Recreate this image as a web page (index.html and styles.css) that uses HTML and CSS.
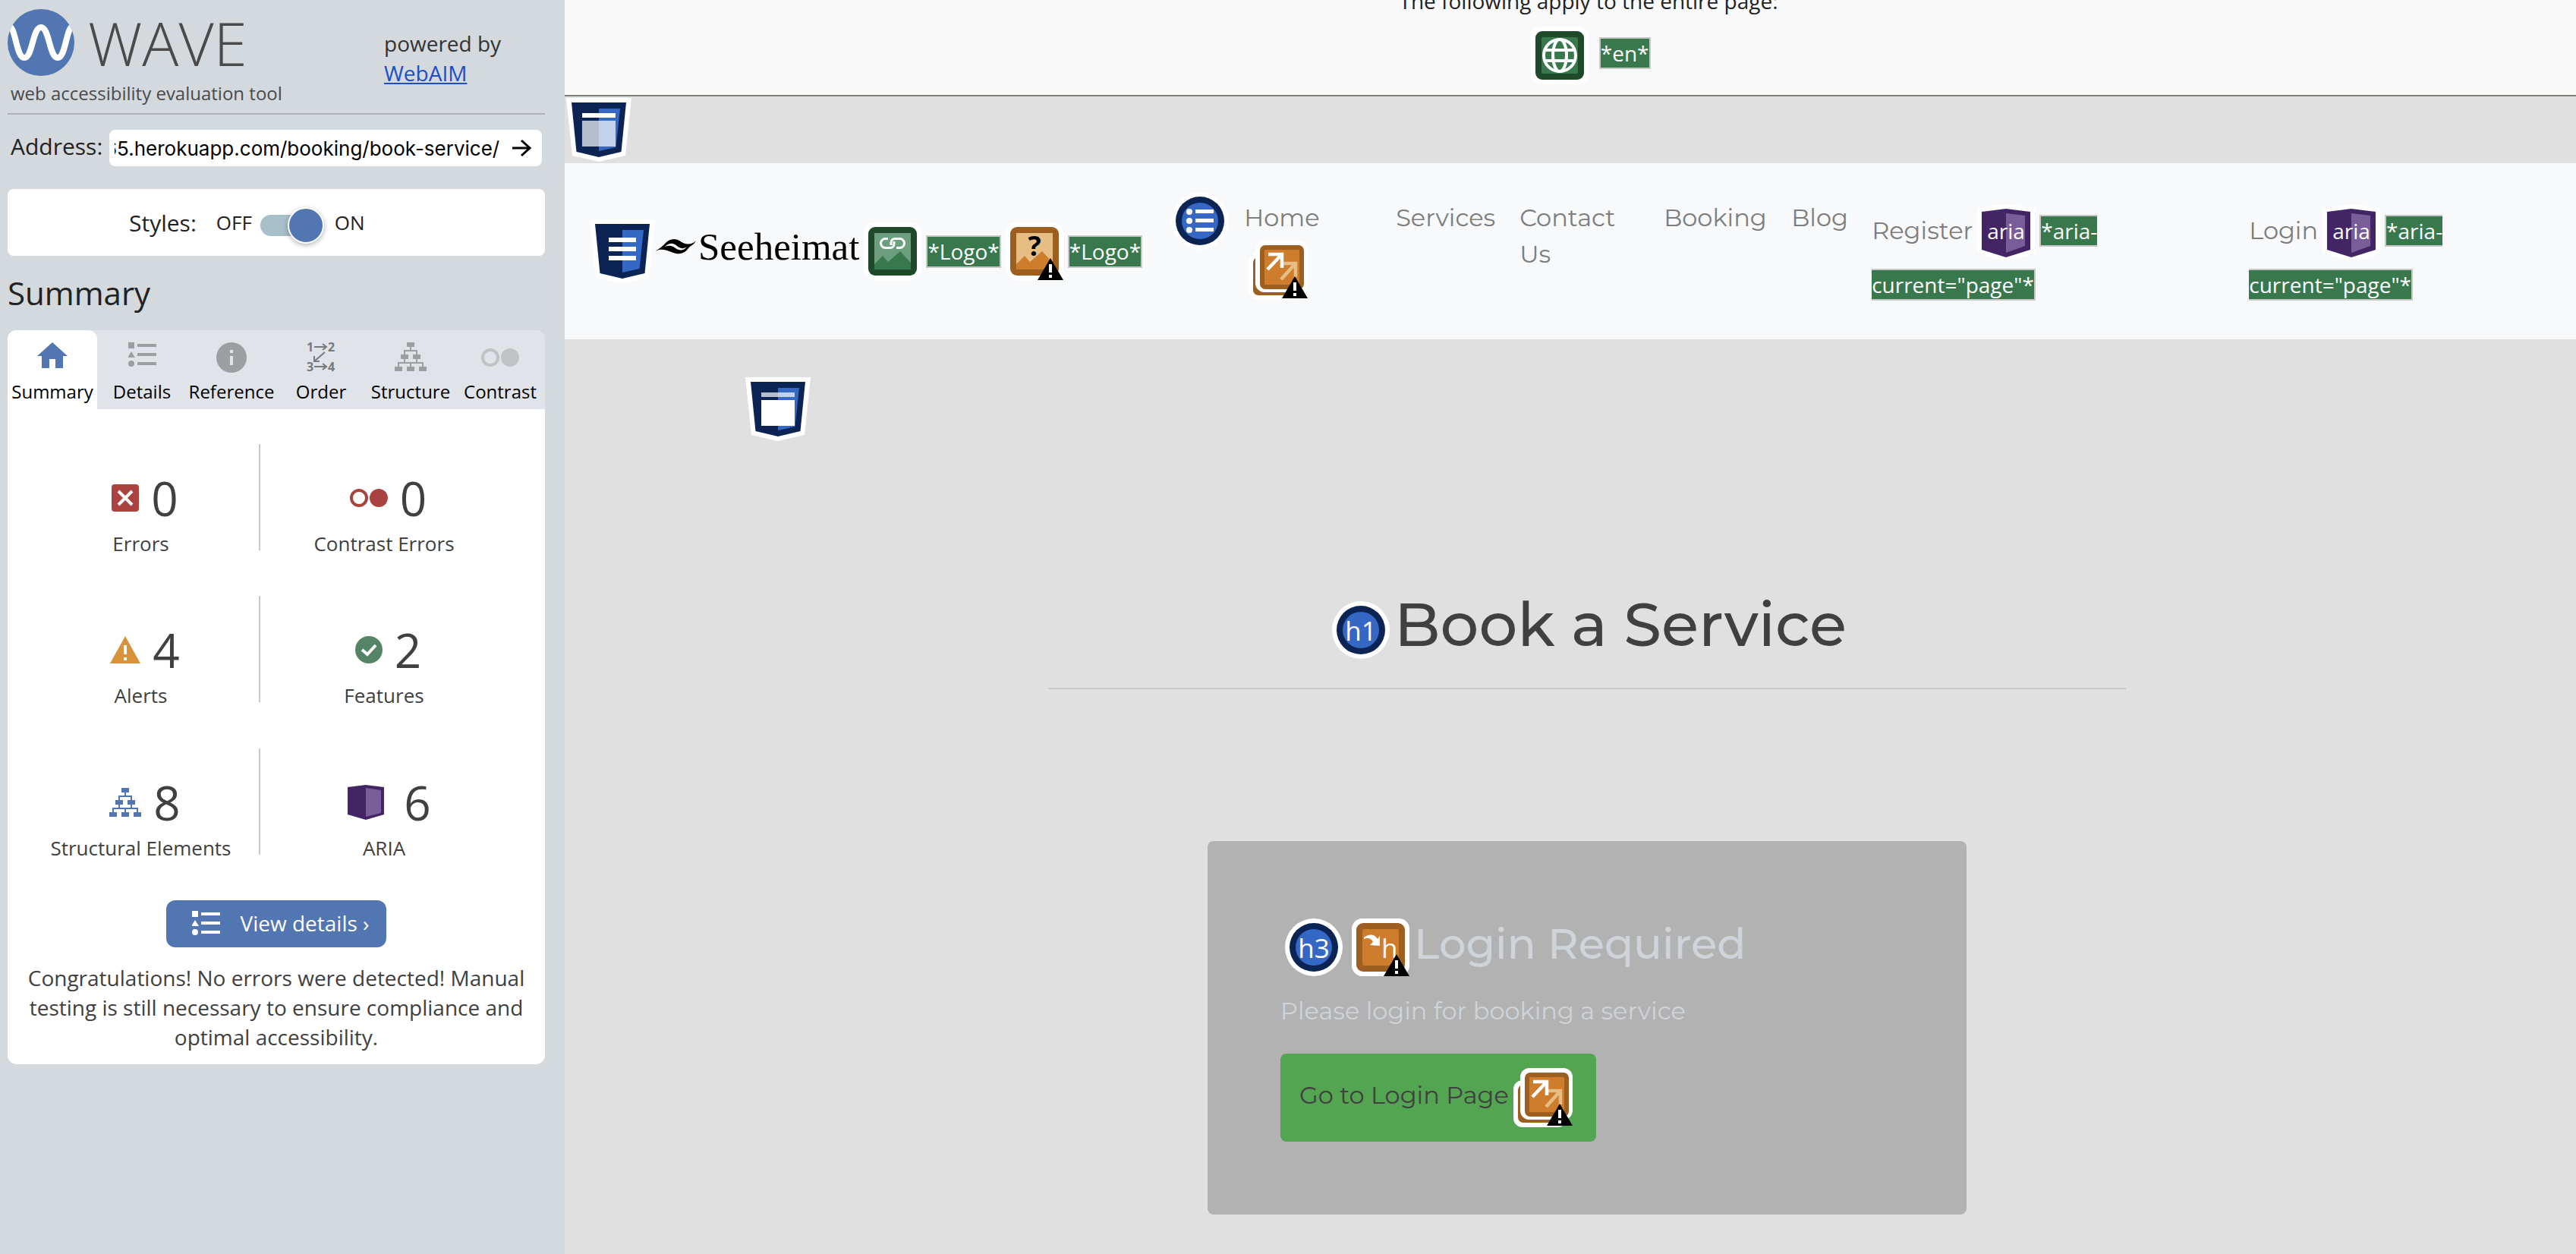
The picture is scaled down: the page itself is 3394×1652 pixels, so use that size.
FILE: index.html
```html
<!DOCTYPE html>
<html lang="en">
<head>
<meta charset="utf-8">
<title>WAVE Report</title>
<link rel="stylesheet" href="styles.css">
</head>
<body>
<svg class="sprite" aria-hidden="true">
  <symbol id="shield" viewBox="0 0 86 84">
    <path fill="#fff" d="M0 0H86L78 76 43 84 8 76Z"/>
    <path fill="#0b2454" d="M7 6H79L72.500 71 43 78 13.500 71Z"/>
    <path fill="#3568c4" d="M43 14H71L65.500 65 43 70Z"/>
  </symbol>
  <symbol id="warn" viewBox="0 0 34 29">
    <path d="M17 0 34 29H0Z"/>
    <path fill="#fff" d="M15 8H19V19H15ZM15 22H19V26H15Z"/>
  </symbol>
  <symbol id="tile-orange" viewBox="0 0 76 76">
    <rect width="76" height="76" rx="14" fill="#fff"/>
    <rect x="6" y="6" width="64" height="64" rx="9" fill="#9c5f20"/>
    <rect x="14" y="14" width="48" height="48" rx="2" fill="#cd7d2c"/>
  </symbol>
  <symbol id="tile-green" viewBox="0 0 76 76">
    <rect width="76" height="76" rx="14" fill="#fff"/>
    <rect x="6" y="6" width="64" height="64" rx="9" fill="#1f4a29"/>
    <rect x="14" y="14" width="48" height="48" rx="2" fill="#38784c"/>
  </symbol>
  <symbol id="disc" viewBox="0 0 76 76">
    <circle cx="38" cy="38" r="38" fill="#fff"/>
    <circle cx="38" cy="38" r="32" fill="#0b2454"/>
    <circle cx="38" cy="38" r="24" fill="#3568c4"/>
  </symbol>
  <symbol id="redundant" viewBox="0 0 78 78">
    <rect y="16" width="70" height="62" rx="12" fill="#fff"/>
    <rect x="6" y="22" width="58" height="50" rx="7" fill="#9c5f20"/>
    <rect x="9" y="0" width="69" height="68" rx="12" fill="#fff"/>
    <rect x="15" y="6" width="58" height="58" rx="7" fill="#9c5f20"/>
    <rect x="21" y="12" width="46" height="46" rx="1" fill="#cd7d2c"/>
    <path d="M44 30H62V48M62 30 43 51" fill="none" stroke="#e6bd85" stroke-width="4.500"/>
    <path d="M26 18H44V36M44 18 25 38" fill="none" stroke="#fff" stroke-width="4.500"/>
    <use href="#warn" x="44" y="47" width="34" height="29"/>
  </symbol>
  <symbol id="aria" viewBox="0 0 76 76">
    <path fill="#fff" d="M38 0 76 5V64L38 76 0 64V5Z"/>
    <path fill="#432566" d="M38 6 70 10V60L38 70 6 60V10Z"/>
    <path fill="#795d99" d="M38 12 63 15V55L38 64Z"/>
  </symbol>
  <symbol id="list" viewBox="0 0 37 32">
    <path d="M0 0H8V8H0ZM4 12 9 20H-1ZM12 2H37V6H12ZM12 14H37V18H12ZM12 26H37V30H12Z"/>
    <circle cx="4" cy="28" r="4"/>
  </symbol>
  <symbol id="tree" viewBox="0 0 42 38">
    <path d="M16 0H26V6H16ZM8 16H18V22H8ZM24 16H34V22H24ZM0 32H10V38H0ZM16 32H26V38H16ZM32 32H42V38H32Z"/>
    <path d="M21 6V11M13 16V11H29V16M13 22V27M29 22V27M5 32V27H37V32M21 27V32" fill="none" stroke="currentColor" stroke-width="2"/>
  </symbol>
  <symbol id="contrast" viewBox="0 0 50 24">
    <circle cx="12" cy="12" r="10" fill="none" stroke="currentColor" stroke-width="4"/>
    <circle cx="38" cy="12" r="12"/>
  </symbol>
</svg>

<aside class="sidebar">
  <header class="masthead">
    <div>
      <div class="brand">
        <svg width="88" height="88" viewBox="0 0 88 88" aria-hidden="true">
          <clipPath id="round"><circle cx="44" cy="44" r="44"/></clipPath>
          <circle cx="44" cy="44" r="44" fill="#5276b1"/>
          <path clip-path="url(#round)" d="M1 22C11 22 11 64 22 64S33 24 44 24 55 64 66 64 77 22 87 22" fill="none" stroke="#fff" stroke-width="8"/>
        </svg>
        <h1 class="wordmark">WAVE</h1>
      </div>
      <p class="tagline">web accessibility evaluation tool</p>
    </div>
    <p class="powered">powered by<br><a href="#webaim">WebAIM</a></p>
  </header>

  <form class="address">
    <label for="url">Address:</label>
    <div class="address-box">
      <input id="url" type="text" value="65.herokuapp.com/booking/book-service/">
      <button class="go" type="button" aria-label="Analyze">
        <svg width="26" height="24" viewBox="0 0 26 24" aria-hidden="true"><path d="M1 12H24M13 2 24 12 13 22" fill="none" stroke="#000" stroke-width="3"/></svg>
      </button>
    </div>
  </form>

  <div class="styles-card">
    <label class="styles-label" for="styles">Styles:</label>
    <span>OFF</span>
    <input id="styles" class="switch" type="checkbox" checked>
    <span>ON</span>
  </div>

  <h2 class="section-title">Summary</h2>

  <section class="report">
    <div class="tabs" role="tablist">
      <button class="tab active" role="tab" aria-selected="true">
        <svg width="40" height="40" viewBox="0 0 40 40"><path d="M20 0 40 18H34V34H24V22H16V34H6V18H0Z"/></svg>
        Summary</button>
      <button class="tab" role="tab">
        <svg width="40" height="40"><use href="#list" x="2" y="0" width="37" height="32"/></svg>
        Details</button>
      <button class="tab" role="tab">
        <svg width="40" height="40"><circle cx="20" cy="20" r="20"/><path fill="#e0e4e9" d="M18 10H22V14H18ZM18 18H22V30H18Z"/></svg>
        Reference</button>
      <button class="tab order" role="tab">
        <svg width="40" height="40" font-size="16" font-weight="700"><text x="1" y="12">1</text><text x="29" y="12">2</text><text x="1" y="38">3</text><text x="29" y="38">4</text>
          <path d="M11 6H27M22 2 27 6 22 10M11 32H27M22 28 27 32 22 36M25 13 11 25M11 18V25H18" fill="none" stroke="#77797c" stroke-width="2"/></svg>
        Order</button>
      <button class="tab" role="tab">
        <svg width="42" height="40"><use href="#tree" width="42" height="38"/></svg>
        Structure</button>
      <button class="tab dim" role="tab">
        <svg width="50" height="40"><use href="#contrast" y="8" width="50" height="24"/></svg>
        Contrast</button>
    </div>

    <div class="panel" role="tabpanel">
      <div class="counts">
        <div class="count">
          <p class="figure"><svg width="36" height="36" viewBox="0 0 36 36"><rect width="36" height="36" rx="4" fill="#aa4340"/><path d="M9 9 27 27M27 9 9 27" stroke="#fff" stroke-width="4"/></svg>0</p>
          <p class="caption">Errors</p>
        </div>
        <div class="divider"></div>
        <div class="count">
          <p class="figure red"><svg width="50" height="24"><use href="#contrast" width="50" height="24"/></svg>0</p>
          <p class="caption">Contrast Errors</p>
        </div>
        <div class="count">
          <p class="figure"><svg width="40" height="36" viewBox="0 0 40 36"><path d="M20 0 40 36H0Z" fill="#d8923b"/><path d="M18 12H22V24H18ZM18 28H22V32H18Z" fill="#fff"/></svg>4</p>
          <p class="caption">Alerts</p>
        </div>
        <div class="divider"></div>
        <div class="count">
          <p class="figure"><svg width="36" height="36" viewBox="0 0 36 36"><circle cx="18" cy="18" r="18" fill="#558466"/><path d="M9 18 16 24 27 12" fill="none" stroke="#fff" stroke-width="4"/></svg>2</p>
          <p class="caption">Features</p>
        </div>
        <div class="count">
          <p class="figure blue"><svg width="42" height="38"><use href="#tree" width="42" height="38"/></svg>8</p>
          <p class="caption">Structural Elements</p>
        </div>
        <div class="divider"></div>
        <div class="count">
          <p class="figure wide"><svg width="48" height="46" viewBox="0 0 48 46"><path fill="#432566" d="M24 0 48 3V39L24 46 0 39V3Z"/><path fill="#795d99" d="M24 4 44 7V37L24 42Z"/></svg>6</p>
          <p class="caption">ARIA</p>
        </div>
      </div>
      <button class="details"><svg width="37" height="32" aria-hidden="true"><use href="#list" width="37" height="32"/></svg>View details ›</button>
      <p class="note">Congratulations! No errors were detected! Manual testing is still necessary to ensure compliance and optimal accessibility.</p>
    </div>
  </section>
</aside>

<main class="page">
  <section class="page-wide">
    <p class="page-wide-text">The following apply to the entire page:</p>
    <p class="page-wide-icons"><svg class="icon" width="76" height="76" role="img" aria-label="Language"><use href="#tile-green"/><g fill="none" stroke="#fff" stroke-width="4"><circle cx="38" cy="38" r="21"/><ellipse cx="38" cy="38" rx="9" ry="21"/><path d="M20 31H56M20 45H56"/></g></svg> <span class="code">*en*</span></p>
  </section>

  <div class="landmark"><svg width="86" height="84" role="img" aria-label="Header"><use href="#shield"/><path fill="#fff" d="M21 20H65V26H21Z"/><path fill="#fff" fill-opacity=".7" d="M21 30H65V64H21Z"/></svg></div>

  <nav class="navbar">
    <svg width="86" height="84" role="img" aria-label="Navigation"><use href="#shield"/><path fill="#fff" d="M25 24H61V30H25ZM25 36H61V42H25ZM25 48H61V54H25Z"/></svg>
    <a class="site-logo" href="#home">
      <svg width="54" height="20" viewBox="0 0 54 20" aria-hidden="true"><path fill-rule="evenodd" d="M0 16C6 13 10 9 13 6 18 0 26 -2 32 2 38 6 46 10 54 2 51 8 46 9 44 12 40 18 34 20 28 19 20 18 12 10 0 16ZM13 10C19 4 25 5 29 9 34 13 38 13 42 10 38 16 31 15 27 12 22 8 18 8 13 10Z"/></svg>
      <span>Seeheimat</span>
    </a>
    <svg class="icon" width="76" height="76" role="img" aria-label="Linked image"><use href="#tile-green"/><path fill="#6c9f7e" d="M14 14H62V62H14Z"/><path fill="#38784c" d="M14 55 25 44 32 52 48 38 62 53V62H14Z"/><path d="M32 21.500H28.500A6 6 0 0 0 28.500 33.500H35A5 5 0 0 0 40 28.500V25M43 33.500H47.500A6 6 0 0 0 47.500 21.500H41A5 5 0 0 0 36 26.500V30" fill="none" stroke="#fff" stroke-width="3"/></svg>
    <span class="code">*Logo*</span>
    <svg class="icon" width="76" height="76" role="img" aria-label="Suspicious text"><use href="#tile-orange"/><path fill="#e6bd85" d="M14 14H62V62H14Z"/><path fill="#cd7d2c" d="M14 55 25 44 32 52 48 38 62 53V62H14Z"/><text x="38" y="44" text-anchor="middle" font-size="36" font-weight="700">?</text><use href="#warn" x="42" y="47" width="34" height="29"/></svg>
    <span class="code">*Logo*</span>
    <svg class="list-icon" width="76" height="76" role="img" aria-label="List"><use href="#disc"/><g fill="#fff"><circle cx="24" cy="26" r="4"/><circle cx="24" cy="38" r="4"/><circle cx="24" cy="50" r="4"/><path d="M32 23H56V28H32ZM32 35H56V40H32ZM32 47H56V52H32Z"/></g></svg>
    <ul class="menu">
      <li><a href="#home">Home <svg class="icon" width="78" height="78" role="img" aria-label="Redundant link"><use href="#redundant"/></svg></a></li>
      <li><a href="#services">Services</a></li>
      <li><a href="#contact">Contact Us</a></li>
      <li><a href="#booking">Booking</a></li>
      <li><a href="#blog">Blog</a></li>
      <li class="auth"><a href="#register">Register</a><svg class="icon" width="76" height="76"><use href="#aria"/><text x="38" y="46" text-anchor="middle" font-size="28" fill="#fff">aria</text></svg><span class="code">*aria-current="page"*</span></li>
      <li class="auth"><a href="#login">Login</a><svg class="icon" width="76" height="76"><use href="#aria"/><text x="38" y="46" text-anchor="middle" font-size="28" fill="#fff">aria</text></svg><span class="code">*aria-current="page"*</span></li>
    </ul>
  </nav>

  <section class="booking">
    <svg class="main-mark" width="86" height="84" role="img" aria-label="Main content"><use href="#shield"/><path fill="#fff" fill-opacity=".7" d="M21 20H65V26H21Z"/><path fill="#fff" d="M21 30H65V64H21Z"/></svg>
    <div class="booking-body">
      <h1 class="title"><svg class="icon" width="76" height="76"><use href="#disc"/><text x="38" y="52" text-anchor="middle" font-size="35" fill="#fff">h1</text></svg>Book a Service</h1>
      <hr class="rule">
      <div class="card">
        <h3 class="card-title"><svg class="icon" width="76" height="76"><use href="#disc"/><text x="38" y="52" text-anchor="middle" font-size="35" fill="#fff">h3</text></svg><svg class="icon" width="76" height="76"><use href="#tile-orange"/><path fill="#fff" d="M16 25C22 20 30 20 34 27L37 23V36L24 35 28 31C26 26 21 25 16 27Z"/><text x="39" y="52" font-size="35" fill="#fff">h</text><use href="#warn" x="42" y="47" width="34" height="29"/></svg>Login Required</h3>
        <p class="card-text">Please login for booking a service</p>
        <a class="login-button" href="#login">Go to Login Page<svg class="icon" width="78" height="78" role="img" aria-label="Redundant link"><use href="#redundant"/></svg></a>
      </div>
    </div>
  </section>
</main>
<script src="app.js"></script>
</body>
</html>
```
FILE: styles.css
```css
* { box-sizing: border-box; }
body {
  margin: 0;
  display: flex;
  min-height: 100vh;
  background: #e0e0e0;
  color: #222;
  font-family: "Open Sans", "Noto Sans", sans-serif;
  font-size: 28px;
}
h1, h2, h3, p, ul { margin: 0; padding: 0; font-weight: 400; }
button { border: 0; font: inherit; }
svg { flex: none; overflow: visible; font-family: "Open Sans", "Noto Sans", sans-serif; }
.sprite { position: absolute; width: 0; height: 0; }

/* Sidebar */
.sidebar {
  flex: none;
  width: 744px;
  padding: 12px 26px 0 10px;
  background: #d4d9dd;
}
.masthead {
  display: grid;
  grid-template-columns: 496px 1fr;
  padding-bottom: 3px;
  border-bottom: 2px solid #adb0b5;
}
.brand { display: flex; gap: 18px; }
.wordmark { font-size: 80px; line-height: 88px; font-weight: 300; color: #4a4a4a; }
.tagline { padding-left: 4px; font-size: 24px; line-height: 46px; color: #4a4a4a; }
.powered { padding-top: 26px; line-height: 39px; color: #333; }
.powered a { color: #1d4fc4; }

.address { display: flex; margin: 20px 4px 0; }
.address label { width: 130px; font-size: 30px; line-height: 44px; }
.address-box {
  display: flex;
  flex: 1;
  align-items: center;
  height: 48px;
  padding: 0 14px 0 7px;
  border-radius: 8px;
  background: #fff;
}
.address-box input {
  flex: 1;
  min-width: 0;
  padding: 0;
  border: 0;
  outline: 0;
  background: none;
  color: #000;
  font-family: Inter, sans-serif;
  font-size: 26px;
}
.go { display: flex; padding: 0; margin-left: 16px; background: none; }

.styles-card {
  display: flex;
  align-items: center;
  height: 88px;
  margin-top: 30px;
  padding-left: 160px;
  border-radius: 8px;
  background: #fff;
  font-size: 26px;
}
.styles-label { margin-right: 26px; font-size: 30px; }
.switch {
  appearance: none;
  display: flex;
  justify-content: flex-end;
  align-items: center;
  width: 84px;
  height: 28px;
  margin: 8px 14px 0 11px;
  border-radius: 14px;
  background: #a7bfc9;
}
.switch::before {
  content: "";
  flex: none;
  width: 44px;
  height: 44px;
  border: 2px solid #fff;
  border-radius: 50%;
  background: #5276b1;
  box-shadow: 0 2px 6px rgba(0, 0, 0, .3);
}

.section-title { margin: 20px 0; font-size: 42px; line-height: 58px; }

.report { border-radius: 12px; background: #fff; overflow: hidden; }
.tabs {
  display: grid;
  grid-template-columns: repeat(6, 1fr);
  background: linear-gradient(90deg, #fff 60px, #e0e4e9 60px);
}
.tab {
  display: flex;
  flex-direction: column;
  align-items: center;
  gap: 9px;
  height: 104px;
  padding: 16px 0 0;
  background: #e0e4e9;
  color: #000;
  font-size: 24px;
  line-height: 32px;
}
.tab svg { color: #9c9ea1; fill: #9c9ea1; line-height: 16px; }
.tab.dim svg { color: #c0c2c5; fill: #c0c2c5; }
.tab.order svg { fill: #77797c; }
.tab.active { background: #fff; border-radius: 12px 12px 0 0; }
.tab.active svg { fill: #5276b1; }

.panel { display: flex; flex-direction: column; align-items: center; padding: 46px 20px 16px; color: #404040; }
.counts {
  display: grid;
  grid-template-columns: 311px 2px 326px;
  grid-template-rows: 200px 201px 149px;
  align-self: flex-start;
}
.divider { height: 140px; background: #c8c8c8; }
.count { display: flex; flex-direction: column; gap: 10px; padding-top: 39px; }
.figure {
  display: flex;
  justify-content: center;
  align-items: center;
  gap: 16px;
  padding-left: 11px;
  font-size: 62px;
  line-height: 64px;
}
.figure.wide { gap: 26px; padding-left: 14px; }
.figure.red svg { color: #aa4340; fill: #aa4340; }
.figure.blue svg { color: #5276b1; fill: #5276b1; }
.caption { text-align: center; font-size: 26px; line-height: 36px; }
.details {
  display: flex;
  align-items: center;
  gap: 26px;
  height: 62px;
  margin-top: 51px;
  padding: 0 22px 2px 34px;
  border-radius: 12px;
  background: #5276b1;
  color: #fff;
  line-height: 39px;
}
.details svg { fill: #fff; }
.note { margin-top: 21px; text-align: center; line-height: 39px; }

/* Evaluated page */
.page {
  flex: 1;
  min-width: 0;
  overflow: hidden;
  font-family: Montserrat, Inter, sans-serif;
}
.icon { margin: 6px; vertical-align: middle; }
.code {
  border: 2px solid #c8c8c8;
  background: #38784c;
  color: #fff;
  font-family: "Open Sans", "Noto Sans", sans-serif;
  font-size: 28px;
}
.page-wide {
  padding: 0 0 8px 48px;
  border-bottom: 2px solid #7b8177;
  background: #f9f9f9;
  font-family: "Open Sans", "Noto Sans", sans-serif;
  text-align: center;
}
.page-wide-text { margin-top: -18px; line-height: 38px; }
.page-wide-icons { margin-top: 9px; }
.landmark { display: flex; height: 88px; padding: 2px; }

.navbar {
  display: flex;
  align-items: center;
  min-height: 232px;
  padding: 0 33px;
  background: #f8f9fb;
}
.navbar > .code { line-height: 39px; }
.site-logo {
  display: flex;
  align-items: center;
  gap: 3px;
  margin-bottom: 12px;
  color: #000;
  font-family: "Liberation Serif", serif;
  font-size: 51px;
  text-decoration: none;
}
.list-icon { align-self: flex-start; margin: 38px 20px 0 38px; }
.menu {
  flex: 1;
  align-self: flex-start;
  display: grid;
  grid-template-columns: 200px 163px 190px 168px 106px 5fr 4fr;
  padding-top: 48px;
  list-style: none;
  font-size: 32px;
  line-height: 48px;
}
.menu li { padding-right: 32px; }
.menu a { color: #7d7d7d; text-decoration: none; }
.menu .auth { max-width: 370px; }

.booking { padding-top: 50px; }
.main-mark { display: block; margin-left: 238px; }
.booking-body { padding: 194px 0 52px 44px; }
.title { text-align: center; font-size: 80px; line-height: 96px; font-weight: 500; color: #404040; }
.rule { max-width: 1420px; margin: 32px auto 200px; border: 0; border-top: 2px solid #c8c8c8; }
.card {
  max-width: 1000px;
  margin: 0 auto;
  padding: 96px;
  border-radius: 8px;
  background: #b2b2b2;
  color: #ced4da;
}
.card-title { font-size: 56px; line-height: 67px; font-weight: 500; }
.card-text { margin: 16px 0 32px; font-size: 32px; line-height: 48px; }
.login-button {
  display: inline-block;
  padding: 13px 25px;
  border-radius: 8px;
  background: #53a551;
  color: #404040;
  font-size: 32px;
  line-height: 48px;
  text-decoration: none;
}
```
FILE: app.js
```js
// Keep the end of a long address in view.
const url = document.getElementById("url");
url.scrollLeft = url.scrollWidth;
```
